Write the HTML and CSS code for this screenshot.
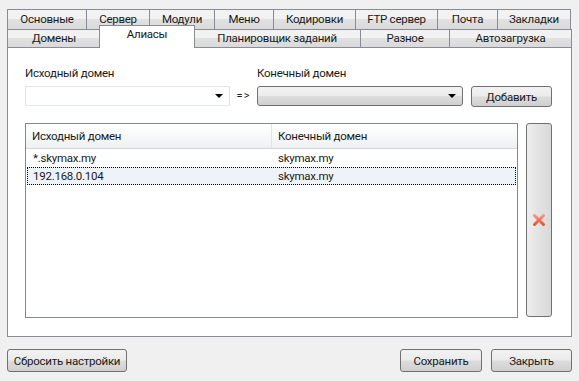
FILE: index.html
```html
<!DOCTYPE html>
<html lang="ru">
<head>
  <meta charset="UTF-8">
  <title>Алиасы</title>
  <link rel="stylesheet" href="styles.css">
</head>
<body>
  <div class="window">
    <div class="tabs">
      <div class="tab-row row-top">
        <div class="tab">Основные</div>
        <div class="tab">Сервер</div>
        <div class="tab">Модули</div>
        <div class="tab">Меню</div>
        <div class="tab">Кодировки</div>
        <div class="tab">FTP сервер</div>
        <div class="tab">Почта</div>
        <div class="tab">Закладки</div>
      </div>
      <div class="tab-row row-bottom">
        <div class="tab">Домены</div>
        <div class="tab active">Алиасы</div>
        <div class="tab">Планировщик заданий</div>
        <div class="tab">Разное</div>
        <div class="tab">Автозагрузка</div>
      </div>
    </div>

    <div class="panel">
      <div class="form-row">
        <div class="field">
          <label>Исходный домен</label>
          <div class="combo edit">
            <span class="combo-text"></span>
            <span class="arrow"></span>
          </div>
        </div>
        <div class="arrow-sign">=&gt;</div>
        <div class="field">
          <label>Конечный домен</label>
          <div class="combo drop">
            <span class="combo-text"></span>
            <span class="arrow"></span>
          </div>
        </div>
        <button class="btn add-btn">Добавить</button>
      </div>

      <div class="list-area">
        <div class="grid">
          <div class="grid-head">
            <div class="cell c1">Исходный домен</div>
            <div class="cell c2">Конечный домен</div>
          </div>
          <div class="grid-row">
            <div class="cell c1">*.skymax.my</div>
            <div class="cell c2">skymax.my</div>
          </div>
          <div class="grid-row selected">
            <div class="cell c1">192.168.0.104</div>
            <div class="cell c2">skymax.my</div>
          </div>
        </div>
        <button class="btn del-btn" title="Удалить">
          <svg width="16" height="16" viewBox="0 0 16 16">
            <defs>
              <linearGradient id="xg" x1="0" y1="0" x2="0" y2="1">
                <stop offset="0" stop-color="#f7967c"/>
                <stop offset="1" stop-color="#e5553a"/>
              </linearGradient>
            </defs>
            <path d="M3.5 3.5L12.5 12.5M12.5 3.5L3.5 12.5" stroke="url(#xg)" stroke-width="3" stroke-linecap="round"/>
          </svg>
        </button>
      </div>
    </div>

    <div class="footer">
      <button class="btn reset-btn">Сбросить настройки</button>
      <div class="footer-right">
        <button class="btn save-btn">Сохранить</button>
        <button class="btn close-btn">Закрыть</button>
      </div>
    </div>
  </div>
</body>
</html>
```

FILE: styles.css
```css
body {
  margin: 0;
  padding: 0;
  background: #f0f0f0;
  font-family: 'Segoe UI', Roboto, 'Noto Sans', sans-serif;
  font-size: 11.5px;
  letter-spacing: -0.25px;
  color: #1a1a1a;
}
.window {
  width: 579px;
  height: 381px;
  padding: 9px 7px 0 7px;
  box-sizing: border-box;
}

/* tabs */
.tabs {
  position: relative;
  z-index: 1;
}
.tab-row {
  display: flex;
  align-items: flex-end;
}
.row-top {
  height: 20px;
}
.row-bottom {
  height: 18px;
}
.tab {
  box-sizing: border-box;
  height: 100%;
  border: 1px solid #898c95;
  border-bottom: none;
  margin-right: -1px;
  background: linear-gradient(#f2f2f2, #f2f2f2 45%, #e1e1e1 50%, #dadada);
  text-align: center;
  line-height: 19px;
  white-space: nowrap;
}
.row-bottom .tab {
  line-height: 17px;
}
.row-top .tab:nth-child(1) { width: 80px; }
.row-top .tab:nth-child(2) { width: 64px; }
.row-top .tab:nth-child(3) { width: 66px; }
.row-top .tab:nth-child(4) { width: 60px; }
.row-top .tab:nth-child(5) { width: 83px; }
.row-top .tab:nth-child(6) { width: 83px; }
.row-top .tab:nth-child(7) { width: 61px; }
.row-top .tab:nth-child(8) { width: 74px; }
.row-bottom .tab:nth-child(1) { width: 94px; }
.row-bottom .tab:nth-child(2) { width: 95px; }
.row-bottom .tab:nth-child(3) { width: 168px; }
.row-bottom .tab:nth-child(4) { width: 90px; }
.row-bottom .tab:nth-child(5) { width: 123px; }
.tab.active {
  height: 23px;
  margin-bottom: -1px;
  margin-left: -1px;
  margin-right: -2px;
  background: #fff;
  position: relative;
  z-index: 2;
  line-height: 17px;
  width: 96px !important;
}

/* panel */
.panel {
  box-sizing: border-box;
  width: 565px;
  height: 290px;
  background: #fff;
  border: 1px solid #898c95;
  padding: 18px 17px 0 17px;
}
.form-row {
  display: flex;
  align-items: flex-end;
}
.field {
  display: flex;
  flex-direction: column;
}
.field label {
  line-height: 14px;
  margin-bottom: 6px;
}
.combo {
  box-sizing: border-box;
  height: 20px;
  display: flex;
  align-items: center;
  justify-content: flex-end;
  padding-right: 6px;
}
.combo.edit {
  width: 205px;
  border: 1px solid #abadb3;
  border-top-color: #e3e3e3;
  border-left-color: #e2e3ea;
  border-right-color: #dbdfe6;
  border-bottom-color: #e3e9ef;
  background: #fff;
}
.combo.drop {
  width: 206px;
  border: 1px solid #707070;
  border-radius: 3px;
  background: linear-gradient(#f2f2f2, #ebebeb 48%, #dddddd 52%, #cfcfcf);
}
.arrow {
  width: 0;
  height: 0;
  border-left: 4px solid transparent;
  border-right: 4px solid transparent;
  border-top: 4px solid #000;
}
.arrow-sign {
  width: 27px;
  height: 20px;
  line-height: 20px;
  text-align: center;
  font-size: 11px;
  letter-spacing: 1px;
}
.btn {
  box-sizing: border-box;
  font-family: inherit;
  font-size: 11.5px;
  letter-spacing: -0.25px;
  color: #1a1a1a;
  border: 1px solid #707070;
  border-radius: 3px;
  background: linear-gradient(#f2f2f2, #ebebeb 48%, #dddddd 52%, #cfcfcf);
  padding: 0;
  white-space: nowrap;
  cursor: pointer;
}
.add-btn {
  width: 81px;
  height: 21px;
  margin-left: 8px;
  margin-bottom: -1px;
}

/* list */
.list-area {
  display: flex;
  margin-top: 17px;
}
.grid {
  box-sizing: border-box;
  width: 493px;
  height: 195px;
  border: 1px solid #828790;
  background: #fff;
}
.grid-head {
  display: flex;
  height: 24px;
  background: linear-gradient(#ffffff, #f6f7f8 60%, #eef0f2);
  border-bottom: 1px solid #d5d5d5;
}
.grid-head .cell {
  line-height: 24px;
}
.grid-head .c1 {
  border-right: 1px solid #e3e5e8;
}
.grid-row {
  display: flex;
  height: 18px;
  margin: 0 1px;
}
.cell {
  box-sizing: border-box;
  padding-left: 6px;
  line-height: 18px;
  white-space: nowrap;
}
.c1 {
  width: 246px;
}
.grid-row .c1 {
  width: 245px;
}
.c2 {
  flex: 1;
}
.grid-row.selected {
  height: 18px;
  background: #eef3fa;
  outline: 1px dotted #000;
  outline-offset: -1px;
}
.del-btn {
  width: 26px;
  height: 194px;
  margin-left: 8px;
  display: flex;
  align-items: center;
  justify-content: center;
  background: linear-gradient(90deg, #eeeeee, #e2e2e2 50%, #d9d9d9);
}

/* footer */
.footer {
  display: flex;
  justify-content: space-between;
  margin-top: 12px;
}
.footer-right {
  display: flex;
  gap: 9px;
}
.reset-btn {
  width: 120px;
  height: 23px;
}
.save-btn {
  width: 82px;
  height: 23px;
}
.close-btn {
  width: 81px;
  height: 23px;
}
```
